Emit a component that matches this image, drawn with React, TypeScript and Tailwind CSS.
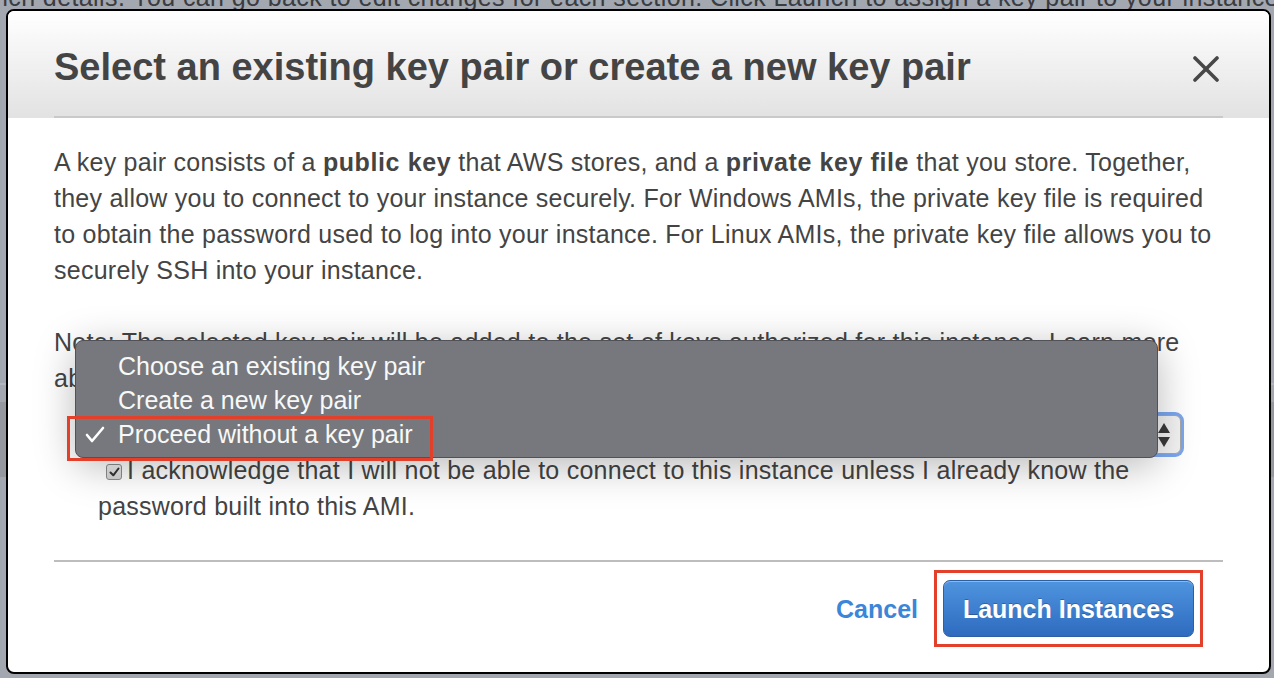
export default function App() {
  return (
    <div className="w-[1274px] h-[678px] overflow-hidden bg-[linear-gradient(to_bottom,#a3a7af_0px,#a3a7af_383px,#b3b6bc_383px,#b3b6bc_385px,#a3a7af_385px,#a3a7af_402px,#95999f_402px,#95999f_477px,#a3a7af_477px)] font-['Liberation_Sans',Arial,sans-serif] text-[#444]">
      <div className="h-[9px] overflow-hidden whitespace-nowrap text-[25px] leading-[25px] tracking-[0.4px] text-[#3a3c41]">
        <div className="-mt-[15px] -ml-[6px]">
          nch details. You can go back to edit changes for each section. Click Launch to assign a key pair to your instance and complete the launch process.
        </div>
      </div>
      <div className="ml-[6px] mr-[3px] h-[665px] rounded-[8px] border-2 border-black bg-white overflow-hidden flex flex-col">
        <div className="h-[107px] shrink-0 flex flex-col bg-[linear-gradient(to_bottom,#ffffff,#e2e2e2)]">
          <div className="flex-1 flex items-center justify-between pl-[46px] pr-[50px] pt-[6px]">
            <h1 className="text-[38px] leading-[44px] font-bold text-[#444]">
              Select an existing key pair or create a new key pair
            </h1>
            <svg width="26" height="26" viewBox="0 0 26 26" className="mt-[4px]">
              <line x1="2" y1="2" x2="24" y2="24" stroke="#474747" strokeWidth="3.6" strokeLinecap="round" />
              <line x1="24" y1="2" x2="2" y2="24" stroke="#474747" strokeWidth="3.6" strokeLinecap="round" />
            </svg>
          </div>
          <div className="mx-[46px] h-[2px] bg-[#c9c9c9]" />
        </div>

        <div className="px-[46px] pt-[26px] text-[25px] leading-[36px] tracking-[0.25px]">
          <p>
            A key pair consists of a <b className="tracking-[0.6px]">public key</b> that AWS stores, and a{" "}
            <b className="tracking-[0.6px]">private key file</b> that you store. Together, they allow you to connect to
            your instance securely. For Windows AMIs, the private key file is required to obtain the password used to
            log into your instance. For Linux AMIs, the private key file allows you to securely SSH into your instance.
          </p>
          <p className="mt-[36px]">
            Note: The selected key pair will be added to the set of keys authorized for this instance. Learn more about
            removing existing key pairs from a public AMI.
          </p>

          <div className="relative mt-[19px] ml-[44px] mr-[42px] h-[39px] rounded-[6px] border border-[#a8a8a8] bg-[#f4f4f4] shadow-[0_0_0_3px_#7ca7ef] flex items-center justify-end pr-[9px]">
            <svg width="14" height="28" viewBox="0 0 14 28">
              <polygon points="7,2 13,12 1,12" fill="#3a3a3a" />
              <polygon points="1,16 13,16 7,26" fill="#3a3a3a" />
            </svg>

            <div className="absolute left-[-24px] top-[-76px] w-[1083px] h-[118px] rounded-[8px] border border-[#505257] bg-[#76787d] shadow-[0_8px_40px_rgba(0,0,0,0.28)] pt-[8px] text-[25px] leading-[34px] tracking-normal text-[#f8f8f8]">
              <div className="pl-[42px]">Choose an existing key pair</div>
              <div className="pl-[42px]">Create a new key pair</div>
              <div className="relative pl-[42px]">
                <svg width="20" height="17" viewBox="0 0 20 17" className="absolute left-[9px] top-[9px]">
                  <polyline points="2,9 7,15 18,2" fill="none" stroke="#ffffff" strokeWidth="2.6" strokeLinecap="round" strokeLinejoin="round" />
                </svg>
                Proceed without a key pair
                <div className="absolute left-[-9px] top-[-1px] w-[366px] h-[45px] border-[3px] border-[#e3402b]" />
              </div>
            </div>
          </div>

          <p className="mt-[-2px] pl-[44px]">
            <span className="inline-flex items-center justify-center w-[16px] h-[16px] ml-[8px] mr-[5px] align-[2px] rounded-[3px] border border-[#8d8d8d] bg-[linear-gradient(to_bottom,#f2f2f2,#d2d2d2)]">
              <svg width="11" height="10" viewBox="0 0 11 10">
                <polyline points="1.5,5.5 4.3,8.3 9.5,1.5" fill="none" stroke="#333" strokeWidth="2" strokeLinecap="round" strokeLinejoin="round" />
              </svg>
            </span>
            I acknowledge that I will not be able to connect to this instance unless I already know the password built
            into this AMI.
          </p>

          <div className="mt-[36px] h-[2px] bg-[#bdbdbd]" />

          <div className="flex justify-end items-center pt-[18px] pr-[29px] gap-[25px] tracking-normal">
            <span className="text-[25px] font-bold text-[#3b86d8]">Cancel</span>
            <div className="relative w-[251px] h-[57px] rounded-[7px] border border-[#2b5fa6] bg-[linear-gradient(to_bottom,#4f94df,#2e6bbf)] shadow-[inset_0_1px_0_rgba(255,255,255,0.35)] flex items-center justify-center text-white text-[25px] font-bold [text-shadow:0_-1px_0_rgba(0,0,0,0.25)]">
              Launch Instances
              <div className="absolute -left-[10px] -top-[11px] -right-[10px] -bottom-[11px] border-[3px] border-[#e3402b]" />
            </div>
          </div>
        </div>
      </div>
    </div>
  );
}
